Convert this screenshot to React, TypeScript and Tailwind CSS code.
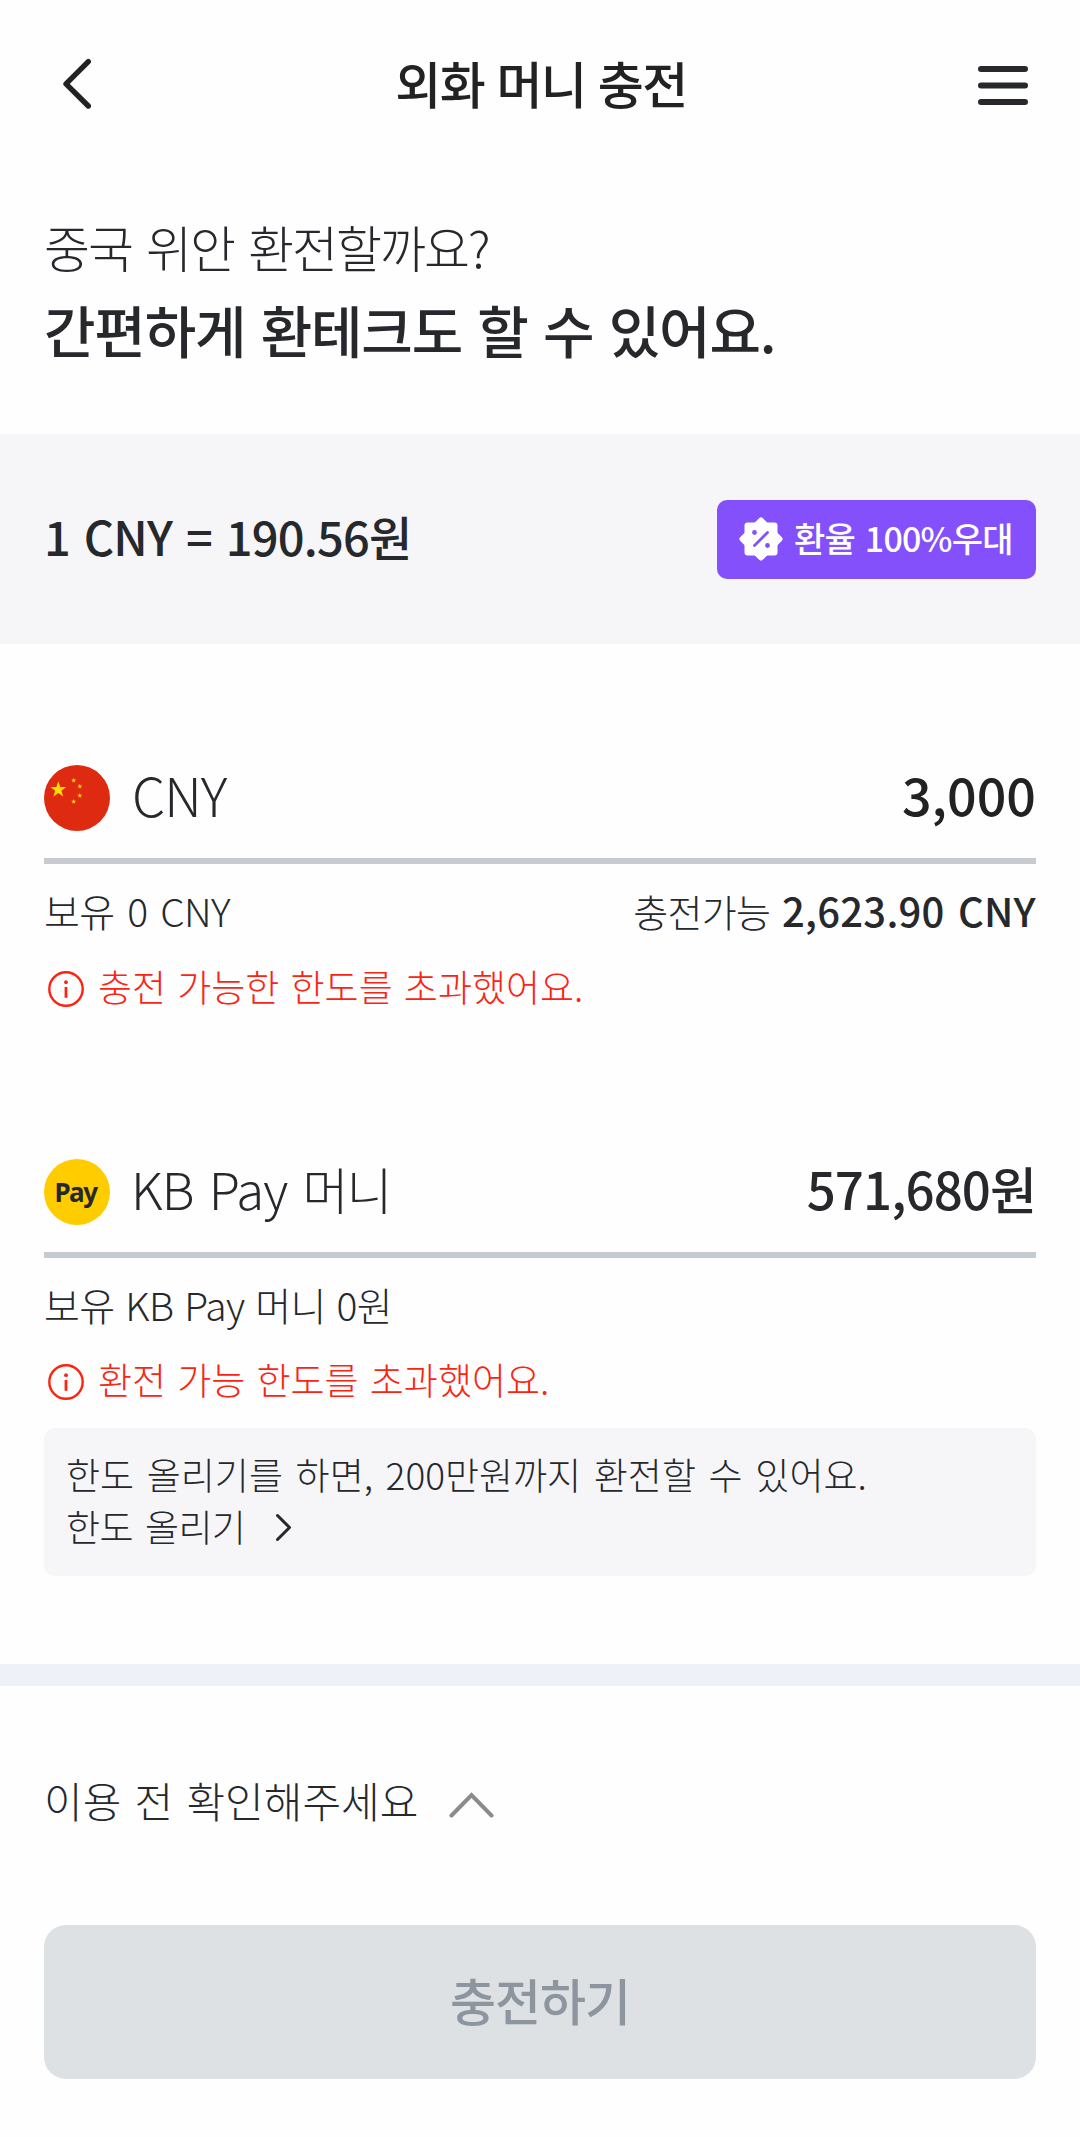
import type { ReactNode } from "react";

const ChevronLeftIcon = () => (
  <svg className="w-[32px] h-[54px]" viewBox="0 0 32 54" fill="none" stroke="#222" strokeWidth="5.4" strokeLinecap="round" strokeLinejoin="round">
    <path d="M28.3 3.6 L6 25.8 L28.3 48" />
  </svg>
);

const MenuIcon = () => (
  <svg className="w-[50px] h-[42px]" viewBox="0 0 50 42" fill="#26282c">
    <rect x="0" y="2" width="50" height="6" rx="3" />
    <rect x="0" y="18.4" width="50" height="6" rx="3" />
    <rect x="0" y="35" width="50" height="6" rx="3" />
  </svg>
);

const PercentIcon = () => (
  <svg className="w-[44px] h-[44px]" viewBox="0 0 44 44" fill="none">
    <g fill="#fff" stroke="#fff" strokeWidth="6" strokeLinejoin="round">
      <rect x="8.5" y="8.5" width="27" height="27" />
      <path d="M22 3.5 L40.5 22 L22 40.5 L3.5 22 Z" />
    </g>
    <path d="M15.5 28.5 L28.5 15.5" stroke="#8350fb" strokeWidth="2.8" strokeLinecap="round" />
    <circle cx="15.5" cy="15.5" r="2.4" fill="#8350fb" />
    <circle cx="28.5" cy="28.5" r="2.4" fill="#8350fb" />
  </svg>
);

const ChinaFlag = () => (
  <svg className="w-[66px] h-[66px] shrink-0" viewBox="0 0 66 66">
    <circle cx="33" cy="33" r="33" fill="#de2a10" />
    <g fill="#ffde00">
      <path d="M14.3 16.2 L16.2 22 L22.2 22.1 L17.4 25.7 L19.2 31.4 L14.3 28 L9.4 31.4 L11.2 25.7 L6.4 22.1 L12.4 22 Z" />
      <path d="M29.7 12.8 l.6 1.7 1.9 0 -1.5 1.2 .5 1.8 -1.5 -1 -1.5 1 .5 -1.8 -1.5 -1.2 1.9 0Z" />
      <path d="M35.8 18.8 l.6 1.7 1.9 0 -1.5 1.2 .5 1.8 -1.5 -1 -1.5 1 .5 -1.8 -1.5 -1.2 1.9 0Z" />
      <path d="M35.8 28 l.6 1.7 1.9 0 -1.5 1.2 .5 1.8 -1.5 -1 -1.5 1 .5 -1.8 -1.5 -1.2 1.9 0Z" />
      <path d="M29.7 34 l.6 1.7 1.9 0 -1.5 1.2 .5 1.8 -1.5 -1 -1.5 1 .5 -1.8 -1.5 -1.2 1.9 0Z" />
    </g>
  </svg>
);

const InfoIcon = () => (
  <svg className="w-[36px] h-[36px] shrink-0" viewBox="0 0 36 36" fill="none">
    <circle cx="18" cy="18" r="16.7" stroke="#fb2413" strokeWidth="2.4" />
    <circle cx="18" cy="11.2" r="1.9" fill="#fb2413" />
    <path d="M18 16 V26.8" stroke="#fb2413" strokeWidth="2.8" />
  </svg>
);

const ErrorMessage = ({ children }: { children: ReactNode }) => (
  <div className="flex items-center h-[50px] pl-1 gap-[14px] text-[#fb2413]">
    <InfoIcon />
    <p className="pb-[5px] text-[37px] font-light [word-spacing:3px]">{children}</p>
  </div>
);

const App = () => {
  return (
    <div className="w-[1080px] h-[2137px] bg-[#fefefe] text-[#26282c] font-['Noto_Sans_CJK_KR',sans-serif] whitespace-nowrap overflow-hidden leading-none">
      <header className="flex items-center justify-between h-[170px] pl-[60px] pr-[52px]">
        <button className="w-[50px]"><ChevronLeftIcon /></button>
        <h1 className="pb-[7px] pr-[6px] text-[50px] font-medium text-[#222] tracking-[-1.5px] [word-spacing:2.5px]">외화 머니 충전</h1>
        <button><MenuIcon /></button>
      </header>

      <section className="h-[264px] pl-[44px] pt-[36px]">
        <p className="text-[50px] leading-[80px] font-light tracking-[-2px] [word-spacing:5px]">중국 위안 환전할까요?</p>
        <p className="text-[56px] leading-[85px] font-medium tracking-[-1.2px] [word-spacing:4px]">간편하게 환테크도 할 수 있어요.</p>
      </section>

      <section className="flex items-center justify-between h-[210px] px-[44px] bg-[#f6f6f9]">
        <p className="pb-[7px] text-[47px] font-medium tracking-[-0.8px] [word-spacing:4px]">1 CNY = 190.56원</p>
        <div className="flex items-center w-[319px] h-[79px] pl-[22px] gap-[11px] rounded-[10px] bg-[#8350fb] text-white">
          <PercentIcon />
          <span className="pb-[3px] text-[34px] font-medium tracking-[-0.8px] [word-spacing:3px]">환율 100%우대</span>
        </div>
      </section>

      <section className="px-[44px] pt-[121px] h-[515px]">
        <div className="flex items-center h-[66px]">
          <ChinaFlag />
          <span className="ml-[22px] pb-[8px] text-[53px] font-light tracking-[-1px]">CNY</span>
          <span className="ml-auto pb-[8px] text-[52px] font-medium text-[#222]">3,000</span>
        </div>
        <div className="mt-[27px] h-[6px] bg-[#c5cbd0]" />
        <div className="flex items-center justify-between mt-[24px] h-[50px]">
          <span className="pb-[6px] text-[39px] font-light tracking-[-0.7px] [word-spacing:5px]">보유 0 CNY</span>
          <span className="pb-[6px] text-[38px] font-light tracking-[-0.7px] [word-spacing:4px]">
            충전가능 <b className="text-[40px] font-medium tracking-[0.25px]">2,623.90 CNY</b>
          </span>
        </div>
        <div className="mt-[26px]">
          <ErrorMessage>충전 가능한 한도를 초과했어요.</ErrorMessage>
        </div>
      </section>

      <section className="px-[44px] h-[505px]">
        <div className="flex items-center h-[66px]">
          <div className="flex items-center justify-center w-[66px] h-[66px] pr-[3px] rounded-full bg-[#ffcc00]">
            <span className="pb-[1px] font-['Noto_Sans',sans-serif] text-[26px] font-bold tracking-[-1.5px]">Pay</span>
          </div>
          <span className="ml-[21px] pb-[8px] text-[51px] font-light tracking-[-1px] [word-spacing:5px]">
            KB Pay <span className="text-[50px] tracking-[-2px]">머니</span>
          </span>
          <span className="ml-auto pb-[8px] text-[51px] font-medium tracking-[-0.9px]">571,680원</span>
        </div>
        <div className="mt-[27px] h-[6px] bg-[#c5cbd0]" />
        <div className="flex items-center mt-[24px] h-[50px]">
          <span className="pb-[6px] text-[39px] font-light tracking-[-0.7px] [word-spacing:3px]">보유 KB Pay 머니 0원</span>
        </div>
        <div className="mt-[25px]">
          <ErrorMessage>환전 가능 한도를 초과했어요.</ErrorMessage>
        </div>
        <div className="mt-[21px] h-[148px] pl-[22px] pt-[20px] rounded-[11px] bg-[#f6f6f9] text-[37px] leading-[52px] font-light [word-spacing:4.5px]">
          <p>한도 올리기를 하면, 200만원까지 환전할 수 있어요.</p>
          <p className="flex items-center tracking-[-0.6px]">
            한도 올리기
            <svg className="ml-[30px] mt-[2px] w-[18px] h-[30px]" viewBox="0 0 18 30" fill="none" stroke="#26282c" strokeWidth="3" strokeLinecap="round" strokeLinejoin="round">
              <path d="M2.5 3.5 L14.5 15.5 L2.5 27.5" />
            </svg>
          </p>
        </div>
      </section>

      <div className="h-[22px] bg-[#eef1f7]" />

      <section className="px-[44px] pt-[90px]">
        <div className="flex items-center h-[56px]">
          <span className="pb-[9px] text-[42px] font-light [word-spacing:4px]">이용 전 확인해주세요</span>
          <svg className="ml-[30px] mt-[1px] w-[46px] h-[28px]" viewBox="0 0 46 28" fill="none" stroke="#8b8b8b" strokeWidth="4" strokeLinecap="round">
            <path d="M3.5 24.5 L23.5 4 L43.5 24.5" />
          </svg>
        </div>
        <button className="block mt-[93px] pb-[6px] w-full h-[154px] rounded-[22px] bg-[#dde1e4] text-[#8d959f] text-[50px] font-medium tracking-[-1px]">
          충전하기
        </button>
      </section>
    </div>
  );
};

export default App;
